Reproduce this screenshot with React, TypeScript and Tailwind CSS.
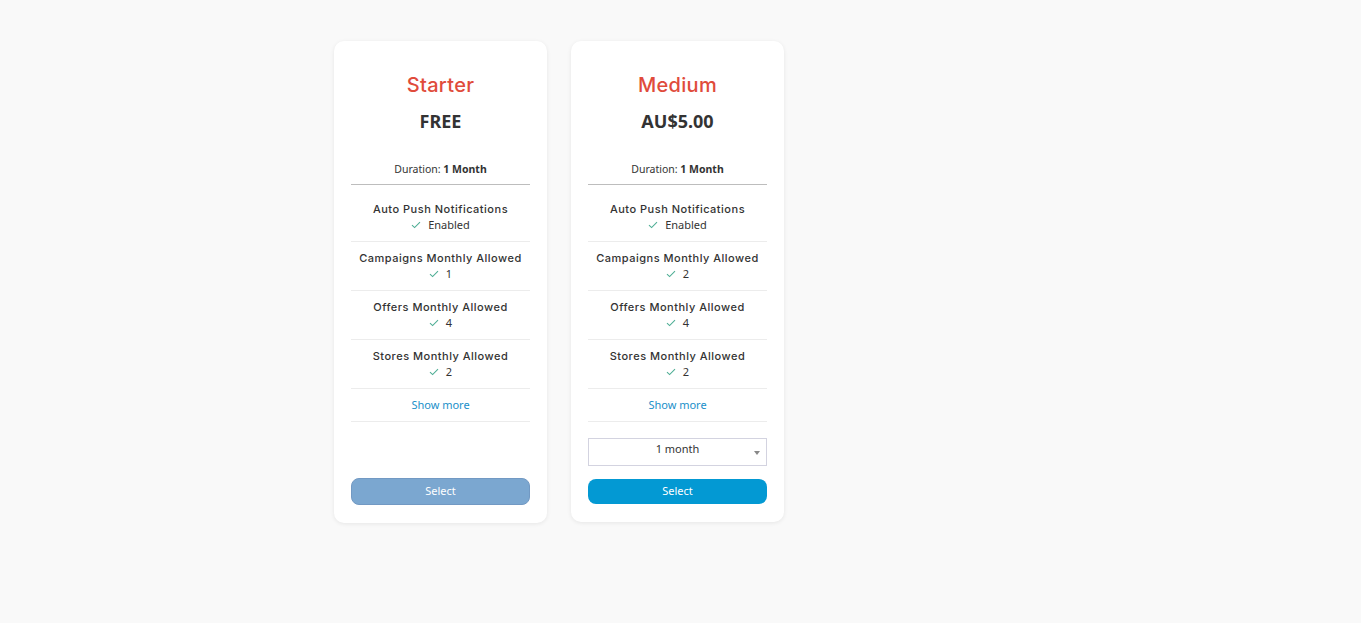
import React from "react";

type Feature = { title: string; value: string };

type Plan = {
  name: string;
  price: string;
  features: Feature[];
  dropdown: boolean;
  active: boolean;
};

const plans: Plan[] = [
  {
    name: "Starter",
    price: "FREE",
    dropdown: false,
    active: false,
    features: [
      { title: "Auto Push Notifications", value: "Enabled" },
      { title: "Campaigns Monthly Allowed", value: "1" },
      { title: "Offers Monthly Allowed", value: "4" },
      { title: "Stores Monthly Allowed", value: "2" },
    ],
  },
  {
    name: "Medium",
    price: "AU$5.00",
    dropdown: true,
    active: true,
    features: [
      { title: "Auto Push Notifications", value: "Enabled" },
      { title: "Campaigns Monthly Allowed", value: "2" },
      { title: "Offers Monthly Allowed", value: "4" },
      { title: "Stores Monthly Allowed", value: "2" },
    ],
  },
];

function Check() {
  return (
    <svg width="10" height="8" viewBox="0 0 10 8" fill="none" className="mr-[7px]">
      <path d="M1 4.2 L3.6 6.6 L9 1.2" stroke="#4fae95" strokeWidth="1.1" />
    </svg>
  );
}

function PlanCard({ plan }: { plan: Plan }) {
  return (
    <div className="w-[213px] bg-white rounded-[10px] shadow-[0_1px_4px_rgba(0,0,0,0.08)] px-[17px] pt-[31px] pb-[18px] flex flex-col">
      {/* HEADER */}
      <h2 className="text-center text-[20px] leading-[26px] font-medium tracking-[0.3px] text-[#e04b3b] font-['Inter',sans-serif]">
        {plan.name}
      </h2>
      <div className="mt-[11px] text-center text-[18px] leading-[24px] font-bold text-[#333] font-['Noto_Sans',sans-serif]">
        {plan.price}
      </div>
      <div className="mt-[28px] pb-[7px] text-center text-[10.5px] leading-[16px] text-[#333] font-['Noto_Sans',sans-serif] border-b border-[#bdbdbd]">
        Duration: <span className="font-bold">1 Month</span>
      </div>
      {/* FEATURES */}
      <div className="mt-[8px] flex flex-col">
        {plan.features.map((f) => (
          <div key={f.title} className="py-[8px] border-b border-[#ececec] text-center">
            <div className="text-[11px] leading-[16px] font-medium tracking-[0.5px] text-[#333] font-['Inter',sans-serif]">
              {f.title}
            </div>
            <div className="flex items-center justify-center text-[11px] leading-[16px] text-[#333] font-['Noto_Sans',sans-serif]">
              <Check />
              {f.value}
            </div>
          </div>
        ))}
        <div className="py-[8px] border-b border-[#ececec] text-center text-[11px] leading-[16px] text-[#1a8fc9] font-['Noto_Sans',sans-serif]">
          Show more
        </div>
      </div>
      {plan.dropdown ? (
        <div className="mt-[16px] h-[28px] pt-[2px] border border-[#d3d3e0] flex items-start justify-center relative text-[11px] leading-[16px] text-[#333] font-['Noto_Sans',sans-serif]">
          1 month
          <span className="absolute right-[6px] top-[12px] w-0 h-0 border-l-[3.5px] border-r-[3.5px] border-t-[4px] border-l-transparent border-r-transparent border-t-[#888]" />
        </div>
      ) : (
        <div className="h-[44px]" />
      )}
      <button
        className={
          plan.active
            ? "mt-[13px] h-[25px] rounded-[8px] bg-[#0399d3] text-white text-[11px] font-['Noto_Sans',sans-serif]"
            : "mt-[12px] h-[27px] rounded-[8px] bg-[#7ba7d0] border border-[#7299c3] text-white text-[11px] font-['Noto_Sans',sans-serif]"
        }
      >
        Select
      </button>
    </div>
  );
}

export default function App() {
  return (
    <div className="min-h-[623px] bg-[#f9f9f9] pl-[334px] pt-[41px] flex items-start gap-[24px]">
      {plans.map((p) => (
        <PlanCard key={p.name} plan={p} />
      ))}
    </div>
  );
}
